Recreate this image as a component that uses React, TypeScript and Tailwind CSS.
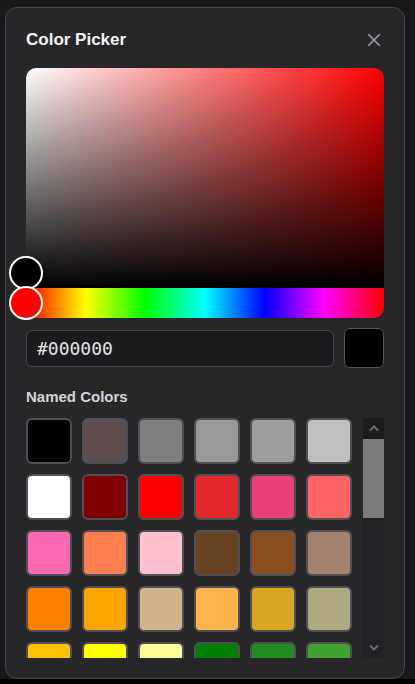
const NAMED_COLORS = [
  "#000000", "#5e4e4e", "#808080", "#999999", "#9c9e9b", "#c0c0c0",
  "#ffffff", "#800000", "#ff0000", "#e3292b", "#eb417a", "#ff6464",
  "#ff69b4", "#ff7f50", "#ffc0cb", "#654321", "#8b4e20", "#a0826d",
  "#ff7f00", "#ffa500", "#d2b48c", "#ffb34d", "#daa520", "#aea97f",
  "#ffc000", "#ffff00", "#ffff99", "#008000", "#228b22", "#40a22f",
];

function Swatch({ color }: { color: string }) {
  return (
    <button
      className="w-[46px] h-[46px] rounded-md border-2 border-[#4f4f57]"
      style={{ backgroundColor: color }}
      title={color}
    />
  );
}

export default function App() {
  return (
    <div className="h-screen bg-black font-['Liberation_Sans',Arial,sans-serif]">
      <div className="bg-[#18181b] px-[5px] pt-[7px]">
        <div className="w-[400px] rounded-xl border border-[#46464d] bg-[#27272a] p-5">
          {/* Header */}
          <div className="flex items-center justify-between h-6">
            <h2 className="text-[17px] font-bold text-[#f4f4f5] leading-6">Color Picker</h2>
            <svg width="12" height="12" viewBox="0 0 12 12" className="mr-1 text-[#a1a1aa]">
              <path d="M0.75 0.75 11.25 11.25M11.25 0.75 0.75 11.25" stroke="currentColor" strokeWidth="1.5" strokeLinecap="round" />
            </svg>
          </div>

          {/* Saturation / value area */}
          <div
            className="relative mt-4 h-[220px] rounded-t-[10px]"
            style={{
              background:
                "linear-gradient(to top, #000, rgba(0,0,0,0)), linear-gradient(to right, #fff, rgba(255,255,255,0)), #ff0000",
            }}
          >
            <div className="absolute left-[-17px] top-[188px] w-[34px] h-[34px] rounded-full border-2 border-white bg-black" />
          </div>

          {/* Hue bar */}
          <div
            className="relative h-[30px] rounded-b-[10px]"
            style={{
              background:
                "linear-gradient(to right, #f00 0%, #ff0 16.66%, #0f0 33.33%, #0ff 50%, #00f 66.66%, #f0f 83.33%, #f00 100%)",
            }}
          >
            <div className="absolute left-[-17px] top-[-2px] w-[34px] h-[34px] rounded-full border-2 border-white bg-[#ff0000]" />
          </div>

          {/* Hex input + preview */}
          <div className="mt-[10px] flex items-center gap-[10px] h-10">
            <input
              readOnly
              value="#000000"
              className="flex-1 h-[37px] rounded-md border border-[#46464d] bg-[#1b1b1e] px-[10px] font-['DejaVu_Sans_Mono',monospace] text-[18px] text-[#e4e4e7] outline-none"
            />
            <div className="w-10 h-10 rounded-md border border-[#55555d] bg-black" />
          </div>

          {/* Named colors */}
          <p className="mt-[19px] text-[15px] leading-5 font-bold text-[#d4d4d8]">Named Colors</p>
          <div className="mt-[11px] flex h-[240px]">
            <div className="overflow-hidden w-[326px]">
              <div className="grid grid-cols-6 gap-[10px]">
                {NAMED_COLORS.map((c, i) => (
                  <Swatch key={i} color={c} />
                ))}
              </div>
            </div>
            <div className="ml-auto w-[21px] flex flex-col bg-[#222226]">
              <div className="h-[21px] flex items-center justify-center bg-[#1c1c1f]">
                <svg width="10" height="7" viewBox="0 0 10 7">
                  <path d="M1 5.5 5 1.5 9 5.5" fill="none" stroke="#6b6b6f" strokeWidth="2" />
                </svg>
              </div>
              <div className="h-[79px] bg-[#7b7b7b]" />
              <div className="flex-1" />
              <div className="h-[21px] flex items-center justify-center">
                <svg width="10" height="7" viewBox="0 0 10 7">
                  <path d="M1 1.5 5 5.5 9 1.5" fill="none" stroke="#6b6b6f" strokeWidth="2" />
                </svg>
              </div>
            </div>
          </div>
        </div>
      </div>
    </div>
  );
}
